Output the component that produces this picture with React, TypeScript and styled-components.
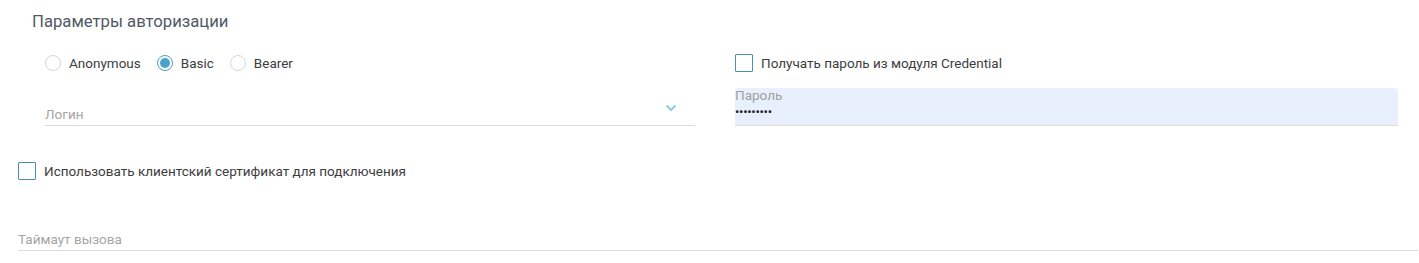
import React, { FC, useState } from 'react';
import styled, { createGlobalStyle } from 'styled-components';

const GlobalStyle = createGlobalStyle`
  body {
    margin: 0;
    background: #ffffff;
    font-family: Roboto, 'Liberation Sans', Arial, sans-serif;
  }
`;

const Page = styled.div`
  box-sizing: border-box;
  width: 1419px;
  padding: 0 1px 0 18px;
`;

const Title = styled.div`
  height: 42px;
  display: flex;
  align-items: center;
  padding-left: 14px;
  font-size: 16.7px;
  color: #4f5a66;
`;

const AuthGrid = styled.div`
  display: grid;
  grid-template-columns: 650px 663px;
  column-gap: 40px;
  padding-left: 27px;
`;

const Column = styled.div`
  display: flex;
  flex-direction: column;
`;

const OptionRow = styled.div`
  height: 42px;
  display: flex;
  align-items: center;
  margin-bottom: 4px;
`;

const RadioLabel = styled.label`
  display: flex;
  align-items: center;
  margin-right: 16px;
  font-size: 13.5px;
  color: #3d3d3d;
  cursor: pointer;
`;

const RadioCircle = styled.span<{ $checked: boolean }>`
  box-sizing: border-box;
  width: 16px;
  height: 16px;
  border-radius: 50%;
  margin-right: 8px;
  border: 1px solid ${(p) => (p.$checked ? '#4a9fc9' : '#d6d6d6')};
  display: flex;
  align-items: center;
  justify-content: center;

  &::after {
    content: '';
    width: 10px;
    height: 10px;
    border-radius: 50%;
    background: ${(p) => (p.$checked ? '#4ba2cb' : 'transparent')};
  }
`;

const CheckLabel = styled.label`
  display: flex;
  align-items: center;
  font-size: 13.5px;
  color: #3d3d3d;
  cursor: pointer;
`;

const CheckBox = styled.span`
  box-sizing: border-box;
  width: 18px;
  height: 18px;
  border: 1.5px solid #4b8fab;
  border-radius: 1px;
  margin-right: 8px;
`;

const Field = styled.div<{ $filled?: boolean }>`
  box-sizing: border-box;
  position: relative;
  height: 38px;
  border-bottom: 1px solid #dcdcdc;
  border-radius: ${(p) => (p.$filled ? '4px 4px 0 0' : '0')};
  background: ${(p) => (p.$filled ? '#e8f0fe' : 'transparent')};
  display: flex;
  flex-direction: column;
  justify-content: ${(p) => (p.$filled ? 'flex-start' : 'flex-end')};
  padding: ${(p) => (p.$filled ? '0' : '0 0 3px 0')};
`;

const Placeholder = styled.span`
  font-size: 13.5px;
  line-height: 16px;
  color: #a5a5a5;
`;

const SmallLabel = styled.span`
  font-size: 13.5px;
  line-height: 15px;
  color: #a0a0a0;
`;

const Dots = styled.span`
  font-size: 13px;
  line-height: 14px;
  margin-top: 2px;
  color: #222;
  letter-spacing: -0.3px;
`;

const Chevron = styled.svg`
  position: absolute;
  right: 18px;
  top: 16px;
`;

const CertRow = styled.div`
  height: 42px;
  margin-top: 24px;
  display: flex;
  align-items: center;
`;

const TimeoutField = styled(Field)`
  margin-top: 21px;
`;

const authTypes = ['Anonymous', 'Basic', 'Bearer'];

const App: FC = () => {
  const [authType, setAuthType] = useState<string>('Basic');

  return (
    <Page>
      <GlobalStyle />
      <Title>Параметры авторизации</Title>
      <AuthGrid>
        <Column>
          <OptionRow>
            {authTypes.map((t) => (
              <RadioLabel key={t} onClick={() => setAuthType(t)}>
                <RadioCircle $checked={authType === t} />
                {t}
              </RadioLabel>
            ))}
          </OptionRow>
          <Field>
            <Placeholder>Логин</Placeholder>
            <Chevron width="12" height="8" viewBox="0 0 12 8">
              <polyline points="1.5,1.5 6,6 10.5,1.5" fill="none" stroke="#8fcbea" strokeWidth="2" />
            </Chevron>
          </Field>
        </Column>
        <Column>
          <OptionRow>
            <CheckLabel>
              <CheckBox />
              Получать пароль из модуля Credential
            </CheckLabel>
          </OptionRow>
          <Field $filled>
            <SmallLabel>Пароль</SmallLabel>
            <Dots>•••••••••</Dots>
          </Field>
        </Column>
      </AuthGrid>
      <CertRow>
        <CheckLabel>
          <CheckBox />
          Использовать клиентский сертификат для подключения
        </CheckLabel>
      </CertRow>
      <TimeoutField>
        <Placeholder>Таймаут вызова</Placeholder>
      </TimeoutField>
    </Page>
  );
};

export default App;
